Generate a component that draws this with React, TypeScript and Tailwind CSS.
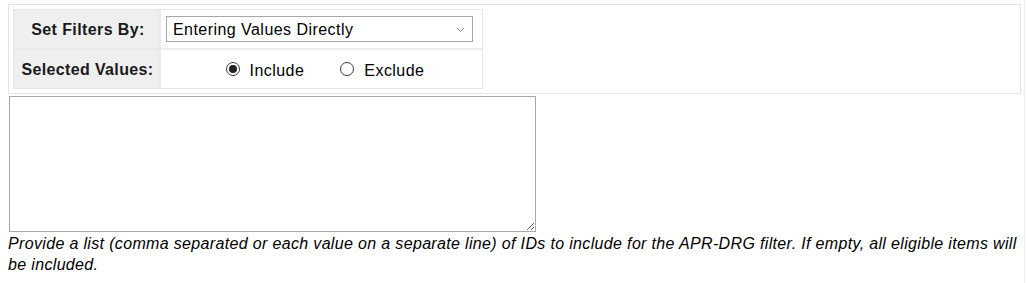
import React from "react";

function Radio({ checked, label }: { checked: boolean; label: string }) {
  return (
    <label className="flex items-center">
      <span className="flex h-[14px] w-[14px] items-center justify-center rounded-full border border-[#3a3a3a] bg-white">
        {checked && <span className="h-[8px] w-[8px] rounded-full bg-[#222222]" />}
      </span>
      <span className="ml-[10px] mt-[3px] text-[16px] tracking-[0.45px] text-black">{label}</span>
    </label>
  );
}

export default function App() {
  return (
    <div
      className="h-[283px] w-[1025px] border-r border-[#ededed] bg-white pl-[8px] pt-[4px]"
      style={{ fontFamily: '"Liberation Sans", Arial, sans-serif' }}
    >
      <div className="w-[1013px] border border-[#e4e4e4] p-[4px]">
        <div className="w-[470px] border border-[#e6e6e6]">
          <div className="grid grid-cols-[147px_1fr]">
            <div className="flex h-[40px] items-center justify-center border-b-2 border-r-2 border-[#e9e9e9] bg-[#efefef] pl-[3px] pt-[1px] text-[16px] font-bold tracking-[0.4px] text-[#1a1a1a]">
              Set Filters By:
            </div>
            <div className="flex h-[40px] items-center border-b-2 border-[#ececec] pl-[5px]">
              <div className="flex h-[26px] w-[307px] items-center justify-between border border-[#a6a6a6] bg-white pl-[6px] pr-[7px] pt-[1px] text-[16px] tracking-[0.45px] text-black">
                <span>Entering Values Directly</span>
                <svg width="9" height="6" viewBox="0 0 9 6" className="mt-[1px]">
                  <path d="M1 1 L4.5 4.5 L8 1" fill="none" stroke="#8a8a8a" strokeWidth="1" />
                </svg>
              </div>
            </div>
            <div className="flex h-[38px] items-center justify-center border-r-2 border-[#e9e9e9] bg-[#efefef] pl-[2px] pt-[2px] text-[16px] font-bold tracking-[0.35px] text-[#1a1a1a]">
              Selected Values:
            </div>
            <div className="flex h-[38px] items-center justify-center gap-[36px] pl-[7px]">
              <Radio checked label="Include" />
              <Radio checked={false} label="Exclude" />
            </div>
          </div>
        </div>
      </div>
      <textarea className="mt-[2px] block h-[136px] w-[527px] ml-[1px] border border-[#a9a9a9] bg-white" />
      <p className="mt-[1px] w-[1014px] text-[16px] italic leading-[21px] tracking-[0.34px] text-black">
        Provide a list (comma separated or each value on a separate line) of IDs to include for the APR-DRG filter. If empty, all eligible items will be included.
      </p>
    </div>
  );
}
